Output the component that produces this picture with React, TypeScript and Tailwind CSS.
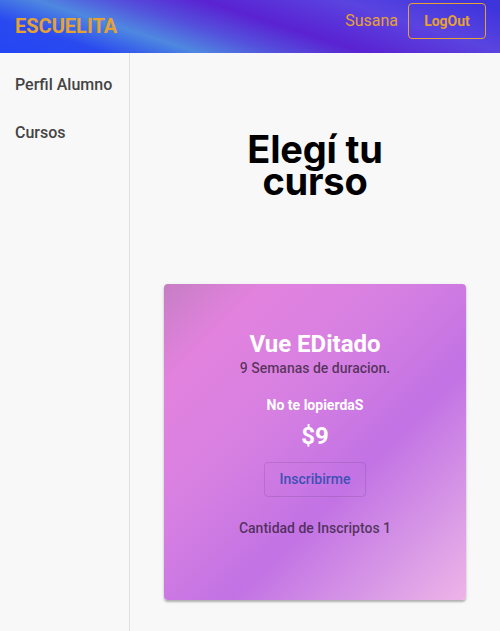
export default function App() {
  return (
    <div className="flex h-[631px] w-[500px] flex-col overflow-hidden bg-[#f8f8f8] font-['Roboto',sans-serif]">
      {/* App bar */}
      <header className="flex h-[53px] shrink-0 bg-[linear-gradient(18deg,#2445f3_0%,#2a4af0_16%,#4e88e0_30%,#5450dc_42%,#5a22d2_55%,#5a44e0_76%,#3d34dc_96%)] pl-[15px] pr-[14px]">
        <div className="flex h-full items-center pb-[1px] text-[20px] font-bold leading-none text-[#e6a133]">ESCUELITA</div>
        <div className="ml-auto flex items-start pt-[3px]">
          <span className="mt-[8px] mr-[10px] text-[16px] leading-[20px] text-[#e6a133]">Susana</span>
          <button className="h-[36px] w-[78px] rounded-[4px] border border-[#e6a133] text-[14px] font-bold text-[#e6a133]">
            LogOut
          </button>
        </div>
      </header>

      <div className="flex flex-1">
        {/* Drawer */}
        <nav className="flex w-[130px] shrink-0 flex-col border-r border-[#e0e0e0] pl-[15px] pt-[20px]">
          <a className="h-[24px] text-[16px] font-medium leading-[24px] text-[#444444]">Perfil Alumno</a>
          <a className="mt-[24px] h-[24px] text-[16px] font-medium leading-[24px] text-[#444444]">Cursos</a>
        </nav>

        {/* Main */}
        <main className="flex flex-1 flex-col items-center pt-[80px]">
          <h1 className="text-center font-['Inter',sans-serif] text-[38px] font-bold leading-[32px] tracking-[-0.2px] text-black">
            Elegí tu
            <br />
            curso
          </h1>

          <div className="mt-[87px] flex h-[316px] w-[302px] flex-col items-center rounded-[4px] bg-[linear-gradient(135deg,#c67ec4_0%,#e282de_16%,#d780e2_38%,#c272e4_62%,#d99ae6_84%,#eeb4e8_100%)] pt-[46px] shadow-[0_2px_2px_rgba(0,0,0,0.25),0_1px_4px_rgba(0,0,0,0.08)]">
            <div className="text-[24px] font-bold leading-[28px] text-white">Vue EDitado</div>
            <div className="text-[14px] font-medium leading-[20px] text-black/60">9 Semanas de duracion.</div>
            <div className="mt-[17px] text-[14px] font-bold leading-[20px] text-white">No te lopierdaS</div>
            <div className="mt-[5px] text-[24px] font-bold leading-[32px] text-white">$9</div>
            <button className="mt-[10px] h-[35px] w-[102px] rounded-[4px] border border-black/10 text-[14px] font-medium text-[#3f51b5]">
              Inscribirme
            </button>
            <div className="mt-[21px] text-[14px] font-medium leading-[20px] text-black/60">Cantidad de Inscriptos 1</div>
          </div>
        </main>
      </div>
    </div>
  );
}
